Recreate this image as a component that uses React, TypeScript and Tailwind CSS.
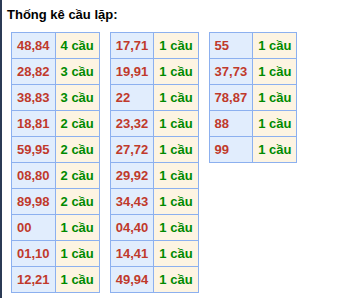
import React from "react";

const t1: [string, string][] = [
  ["48,84", "4 cầu"],
  ["28,82", "3 cầu"],
  ["38,83", "3 cầu"],
  ["18,81", "2 cầu"],
  ["59,95", "2 cầu"],
  ["08,80", "2 cầu"],
  ["89,98", "2 cầu"],
  ["00", "1 cầu"],
  ["01,10", "1 cầu"],
  ["12,21", "1 cầu"],
];
const t2: [string, string][] = [
  ["17,71", "1 cầu"],
  ["19,91", "1 cầu"],
  ["22", "1 cầu"],
  ["23,32", "1 cầu"],
  ["27,72", "1 cầu"],
  ["29,92", "1 cầu"],
  ["34,43", "1 cầu"],
  ["04,40", "1 cầu"],
  ["14,41", "1 cầu"],
  ["49,94", "1 cầu"],
];
const t3: [string, string][] = [
  ["55", "1 cầu"],
  ["37,73", "1 cầu"],
  ["78,87", "1 cầu"],
  ["88", "1 cầu"],
  ["99", "1 cầu"],
];

function T({ rows }: { rows: [string, string][] }) {
  return (
    <table className="border-collapse self-start">
      <tbody>
        {rows.map(([a, b]) => (
          <tr key={a}>
            <td className="border border-[#8cb0ef] bg-[#e1edfd] px-[5px] h-[26px] py-0 text-left text-[#c0392b] font-bold">
              {a}
            </td>
            <td className="border border-[#8cb0ef] bg-[#fdf4e2] px-[5px] h-[26px] py-0 text-left text-[#008a00] font-bold">
              {b}
            </td>
          </tr>
        ))}
      </tbody>
    </table>
  );
}

export default function App() {
  return (
    <div
      className="h-[298px] w-[360px] bg-white border-l-2 border-[#2b3a55] text-[13px] leading-[15px]"
      style={{ fontFamily: '"Liberation Sans", Arial, sans-serif' }}
    >
      <div className="pl-[5px] pt-[7px] font-bold text-black">Thống kê cầu lặp:</div>
      <div className="flex gap-[10px] pl-[9px] mt-[10px]">
        <T rows={t1} />
        <T rows={t2} />
        <T rows={t3} />
      </div>
    </div>
  );
}
